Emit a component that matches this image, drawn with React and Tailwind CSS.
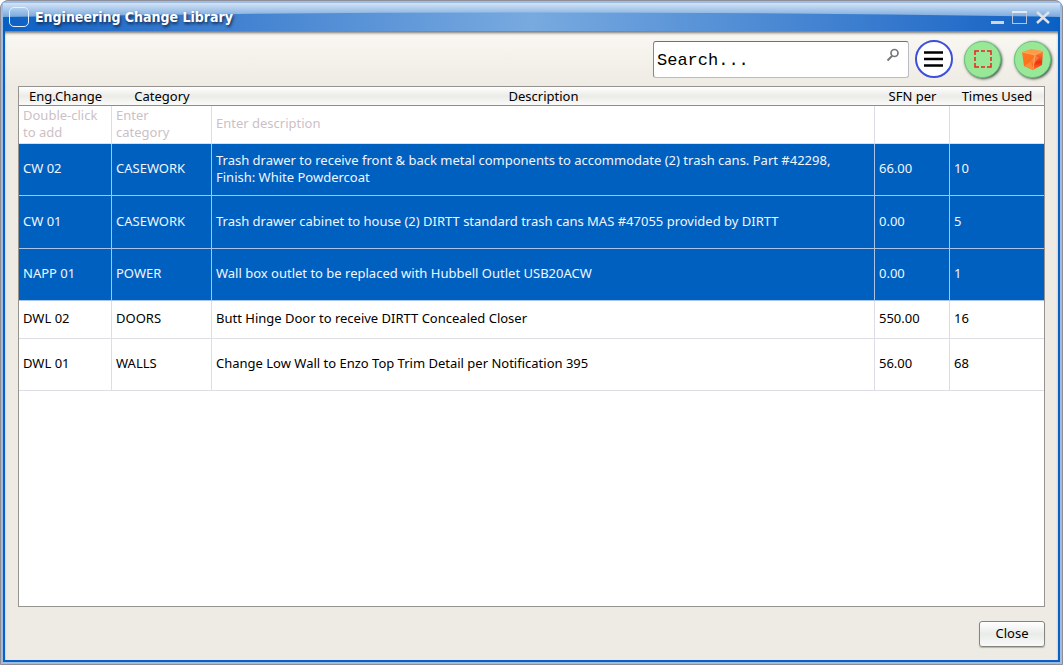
import React from "react";

const rows = [
  { id: "CW 02", category: "CASEWORK", description: "Trash drawer to receive front & back metal components to accommodate (2) trash cans. Part #42298, Finish: White Powdercoat", sfn: "66.00", used: "10", selected: true, height: "h-[52px]" },
  { id: "CW 01", category: "CASEWORK", description: "Trash drawer cabinet to house (2) DIRTT standard trash cans MAS #47055 provided by DIRTT", sfn: "0.00", used: "5", selected: true, height: "h-[53px]" },
  { id: "NAPP 01", category: "POWER", description: "Wall box outlet to be replaced with Hubbell Outlet USB20ACW", sfn: "0.00", used: "1", selected: true, height: "h-[52px]" },
  { id: "DWL 02", category: "DOORS", description: "Butt Hinge Door to receive DIRTT Concealed Closer", sfn: "550.00", used: "16", selected: false, height: "h-[38px]" },
  { id: "DWL 01", category: "WALLS", description: "Change Low Wall to Enzo Top Trim Detail per Notification 395", sfn: "56.00", used: "68", selected: false, height: "h-[52px]" },
];

const columns = ["Eng.Change", "Category", "Description", "SFN per", "Times Used"];

function TitleBar() {
  return (
    <header className="relative flex h-7 shrink-0 items-center bg-linear-to-r from-[#0860c4] via-[#78aadf] to-[#0860c4] pr-2 pl-1.5">
      <svg className="absolute inset-0 h-full w-full" viewBox="0 0 1000 28" preserveAspectRatio="none" aria-hidden="true">
        <defs>
          <linearGradient id="gloss" x1="0" y1="0" x2="0" y2="1">
            <stop offset="0" stopColor="#d3e3f5" />
            <stop offset="1" stopColor="#78a9de" />
          </linearGradient>
        </defs>
        <path d="M0 0H1000V14Q500 5 0 14Z" fill="url(#gloss)" />
      </svg>
      <span className="relative h-5 w-5 shrink-0 rounded-[5px] border border-[#e6f0fb]" aria-hidden="true" />
      <h1 className="relative ml-1.5 flex-1 font-['DejaVu_Sans_Condensed',sans-serif] text-[14px] leading-5 font-bold text-white [text-shadow:1px_2px_3px_#10264a]">Engineering Change Library</h1>
      <div className="relative flex items-center gap-2">
        <button aria-label="Minimize" className="h-4 w-4">
          <svg width="16" height="16" viewBox="0 0 16 16"><path d="M3 13.500h13" stroke="#d6d6d9" strokeWidth="3" /></svg>
        </button>
        <button aria-label="Maximize" className="h-4 w-4">
          <svg width="16" height="16" viewBox="0 0 16 16" fill="none"><path d="M.5 14.500V3M14.500 14.500V3M0 14.500h15" stroke="#b9c4d6" /><path d="M0 3h15" stroke="#e4e9f3" strokeWidth="2" /></svg>
        </button>
        <button aria-label="Close window" className="h-4 w-4">
          <svg width="16" height="16" viewBox="0 0 16 16"><path d="M1 3l12 11M13 3L1 14" stroke="#dfe1e6" strokeWidth="2.500" /></svg>
        </button>
      </div>
    </header>
  );
}

function Toolbar() {
  return (
    <div className="flex items-center justify-end pr-[7px]">
      <label className="flex h-[37px] w-64 items-center rounded-[3px] border border-[#b9bcc6] border-t-[#6d6f7a] border-l-[#85868f] bg-white pr-2 pl-[3px]">
        <input type="search" aria-label="Search" placeholder="Search..." className="min-w-0 flex-1 bg-transparent pt-1 font-['Courier_New','Liberation_Mono',monospace] text-[17px] text-black outline-none placeholder:text-black" />
        <svg className="mb-2 shrink-0" width="14" height="14" viewBox="0 0 14 14" fill="none" stroke="#77777a" aria-hidden="true">
          <circle cx="8.500" cy="5" r="3.500" strokeWidth="1.700" />
          <path d="M6 8L1.500 12.500" strokeWidth="2" />
        </svg>
      </label>
      <button aria-label="Show list" className="ml-1.5 flex h-[38px] w-[38px] items-center justify-center rounded-full border-2 border-[#3c50dc] bg-white">
        <svg width="20" height="16" viewBox="0 0 20 16" aria-hidden="true"><path d="M0 1.500h19M0 8h19M0 14.500h19" stroke="#000" strokeWidth="2.500" /></svg>
      </button>
      <button aria-label="Select area" className="ml-[11px] flex h-[37px] w-[37px] items-center justify-center rounded-full border border-[#6bc47c] bg-[#98e898] shadow-[1px_1px_3px_#2f4a38]">
        <svg width="18" height="18" viewBox="0 0 18 18" fill="none" aria-hidden="true">
          <path d="M1 5V1h4M7 1h4M13 1h4v4M17 7v4M17 13v4h-4M11 17H7M5 17H1v-4M1 11V7" stroke="#ee2020" strokeWidth="1.500" />
        </svg>
      </button>
      <button aria-label="Show component" className="ml-[13px] flex h-[37px] w-[37px] items-center justify-center rounded-full border border-[#6bc47c] bg-[#98e898] shadow-[1px_1px_3px_#2f4a38]">
        <svg width="24" height="24" viewBox="0 0 24 24" aria-hidden="true">
          <defs>
            <linearGradient id="front" x1="0" y1="0" x2="1" y2="1"><stop stopColor="#ff7a1c" /><stop offset="1" stopColor="#ff6a1c" /></linearGradient>
            <linearGradient id="side" x1="0" y1="0" x2="0" y2="1"><stop stopColor="#ff8a34" /><stop offset=".6" stopColor="#f0300c" /><stop offset="1" stopColor="#ff7430" /></linearGradient>
          </defs>
          <path d="M1 5L10 2L22 4L14 8Z" fill="#ff9a48" />
          <path d="M1 5L14 8L12 23L3 19Z" fill="url(#front)" />
          <path d="M14 8L22 4L21 18L12 23Z" fill="url(#side)" />
          <path d="M3 19L10 14L12 23Z" fill="#ff8a3c" />
          <path d="M10 14L14 8L18 11L13 17Z" fill="#ff9a60" opacity=".5" />
          <path d="M1 5L14 8L22 4M14 8L12 22" fill="none" stroke="#ffac66" strokeWidth=".8" />
        </svg>
      </button>
    </div>
  );
}

const entry = "block w-full bg-transparent text-[#cdbfc6] outline-none placeholder:text-[#cdbfc6]";
const entryCell = "border-b border-[#dcdde6] p-0 pb-0.5 pl-1";

function ChangeTable() {
  return (
    <div className="mt-2 mr-[13px] ml-[13px] flex-1 border border-[#97948f] bg-white">
      <table className="w-full table-fixed border-separate border-spacing-0 text-left leading-[17px]">
        <colgroup>
          <col className="w-[93px]" />
          <col className="w-[100px]" />
          <col />
          <col className="w-[75px]" />
          <col className="w-[94px]" />
        </colgroup>
        <thead>
          <tr className="h-[19px]">
            {columns.map((name) => (
              <th key={name} scope="col" className="border-b border-[#8c8c88] bg-linear-to-b from-white via-[#ebebe8] to-[#fafaf8] p-0 pt-px text-center font-normal">{name}</th>
            ))}
          </tr>
        </thead>
        <tbody>
          <tr className="h-[38px] text-[#cdbfc6]">
            <td className={`${entryCell} border-r`}><button className="block w-20 text-left">Double-click to add</button></td>
            <td className={`${entryCell} border-r`}><button className="block w-16 text-left">Enter category</button></td>
            <td className={`${entryCell} border-r`}><input aria-label="Description" placeholder="Enter description" className={entry} /></td>
            <td className={`${entryCell} border-r`}><input aria-label="SFN per" className={entry} /></td>
            <td className={entryCell}><input aria-label="Times used" className={entry} /></td>
          </tr>
          {rows.map((row) => {
            const cell = row.selected ? "border-b border-[#a9c4e6] p-0 pb-0.5 pl-1" : "border-b border-[#dcdde6] p-0 pb-0.5 pl-1";
            return (
              <tr key={row.id} aria-selected={row.selected} className={`${row.height} ${row.selected ? "bg-[#0060c0] text-[#f1f6fc]" : "text-black"}`}>
                <td className={`${cell} border-r`}>{row.id}</td>
                <td className={`${cell} border-r`}>{row.category}</td>
                <td className={`${cell} border-r pr-8`}>{row.description}</td>
                <td className={`${cell} border-r`}>{row.sfn}</td>
                <td className={cell}>{row.used}</td>
              </tr>
            );
          })}
        </tbody>
      </table>
    </div>
  );
}

export default function App() {
  return (
    <div className="flex min-h-screen flex-col rounded-t-lg border border-[#8f8e96] bg-[#0860c4] font-['Noto_Sans',sans-serif] text-[13px] text-black">
      <div className="flex flex-1 flex-col rounded-t-md border-2 border-[#9dbde3]">
        <TitleBar />
        <main className="mx-0.5 mb-0.5 flex flex-1 flex-col bg-linear-to-b from-[#faf8f2] to-[#eeebe4] to-[56px] pt-[9px] shadow-[inset_0_3px_3px_-1px_#77746c]">
          <Toolbar />
          <ChangeTable />
          <div className="flex justify-end pt-3.5 pr-[13px] pb-[13px]">
            <button className="h-[26px] w-[66px] rounded-[3px] border border-[#85857f] bg-linear-to-b from-white via-[#e9ebe9] to-[#f8f9f8] shadow-[0_1px_1px_#b5b3ac]">Close</button>
          </div>
        </main>
      </div>
    </div>
  );
}
